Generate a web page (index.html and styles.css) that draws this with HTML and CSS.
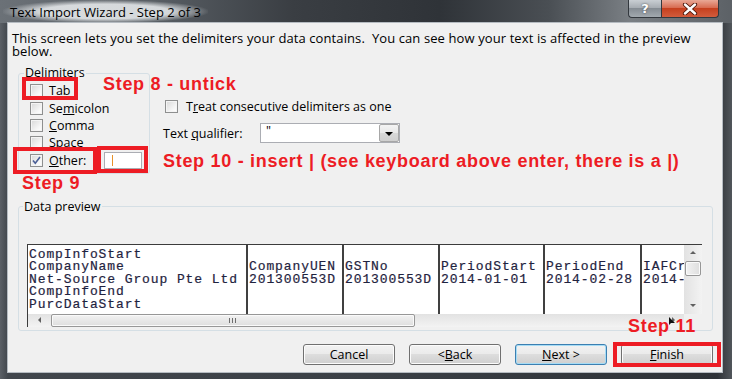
FILE: index.html
```html
<!DOCTYPE html>
<html lang="en">
<head>
    <meta charset="UTF-8">
    <meta name="viewport" content="width=device-width, initial-scale=1.0">
    <title>Text Import Wizard - Step 2 of 3</title>
    <link rel="stylesheet" href="styles.css">
</head>
<body>
<div class="window">
    <div class="titlebar">
        <span class="title">Text Import Wizard - Step 2 of 3</span>
        <div class="caption">
            <span class="cap-btn help">?</span>
            <span class="cap-btn close">
                <svg width="18" height="12" viewBox="0 0 18 12">
                    <path d="M4 1.5 L14 10.5 M14 1.5 L4 10.5" stroke="#4a1408" stroke-width="4.2" stroke-linecap="round"/>
                    <path d="M4 1.5 L14 10.5 M14 1.5 L4 10.5" stroke="#fff" stroke-width="2.4" stroke-linecap="round"/>
                </svg>
            </span>
        </div>
    </div>

    <div class="frame">
        <div class="client">
            <p class="intro">This screen lets you set the delimiters your data contains.&nbsp; You can see how your text is affected in the preview<br>below.</p>

            <div class="options">
                <fieldset class="group delimiters">
                    <legend>Delimiters</legend>
                    <div class="check"><span class="box"></span><span><u>T</u>ab</span></div>
                    <div class="check"><span class="box"></span><span>Se<u>m</u>icolon</span></div>
                    <div class="check"><span class="box"></span><span><u>C</u>omma</span></div>
                    <div class="check"><span class="box"></span><span><u>S</u>pace</span></div>
                    <div class="check">
                        <span class="box">
                            <svg width="11" height="11" viewBox="0 0 11 11"><path d="M2 5.5 L4.3 8.3 L9 2" fill="none" stroke="#4b5f96" stroke-width="1.6"/></svg>
                        </span>
                        <span><u>O</u>ther:</span>
                        <span class="other-input"><span class="caret"></span></span>
                    </div>
                </fieldset>

                <div class="side">
                    <div class="check treat"><span class="box"></span><span>T<u>r</u>eat consecutive delimiters as one</span></div>
                    <div class="qualifier">
                        <span class="qualifier-label">Text <u>q</u>ualifier:</span>
                        <div class="combo"><span class="combo-value">"</span><span class="combo-btn"></span></div>
                    </div>
                    <div class="note">Step 10 - insert | (see keyboard above enter, there is a |)</div>
                </div>
            </div>

            <div class="note step9">Step 9</div>

            <fieldset class="group preview">
                <legend>Data preview</legend>
                <div class="grid-wrap">
                    <div class="grid">
                        <div class="col">CompInfoStart
CompanyName
Net-Source Group Pte Ltd
CompInfoEnd
PurcDataStart</div>
                        <div class="col">
CompanyUEN
201300553D</div>
                        <div class="col">
GSTNo
201300553D</div>
                        <div class="col">
PeriodStart
2014-01-01</div>
                        <div class="col">
PeriodEnd
2014-02-28</div>
                        <div class="col last">
IAFCr
2014-</div>
                    </div>
                    <div class="vscroll">
                        <span class="arrow up"></span>
                        <span class="thumb"></span>
                        <span class="spacer"></span>
                        <span class="arrow down"></span>
                    </div>
                    <div class="hscroll">
                        <span class="arrow left"></span>
                        <span class="thumb"></span>
                        <span class="spacer"></span>
                        <span class="arrow right"></span>
                    </div>
                    <div class="corner"></div>
                </div>
            </fieldset>

            <div class="buttons">
                <span class="btn">Cancel</span>
                <span class="btn">&lt; <u>B</u>ack</span>
                <span class="btn default"><u>N</u>ext &gt;</span>
                <span class="btn"><u>F</u>inish</span>
            </div>

            <!-- tutorial annotations drawn over the dialog -->
            <span class="mark mark-tab"></span>
            <span class="mark mark-other"></span>
            <span class="mark mark-input"></span>
            <span class="mark mark-finish"></span>
            <span class="note note-step8">Step 8 - untick</span>
            <span class="note note-step11">Step 11</span>
            <svg class="pointer" width="8" height="10" viewBox="0 0 8 10"><path d="M1 0 L1 8 L3 6 L7 6 Z" fill="#111"/></svg>
        </div>
    </div>
</div>
</body>
</html>
```

FILE: styles.css
```css
/* Windows 7 style dialog */
* {
    box-sizing: border-box;
}

body {
    margin: 0;
    background: #2b2f34;
    font-family: "Open Sans", "Noto Sans", sans-serif;
}

.window {
    width: 732px;
    height: 379px;
    display: flex;
    flex-direction: column;
    background: #3d4248;
}

/* Title bar */
.titlebar {
    height: 23px;
    display: flex;
    background: linear-gradient(to right, #6b7177 0%, #5a6066 20%, #3a3e43 40%, #2f3338 60%, #4a4f54 75%, #7a7f84 86%, #5c6166 100%);
}

.title {
    margin-left: 3px;
    padding: 0 7px;
    font-size: 13px;
    line-height: 24px;
    color: #000;
    background: radial-gradient(ellipse at center, rgba(235, 238, 240, 0.85) 45%, rgba(235, 238, 240, 0) 72%);
}

.caption {
    margin-left: auto;
    margin-right: 13px;
    display: flex;
    align-self: flex-start;
}

.cap-btn {
    height: 18px;
    display: flex;
    align-items: center;
    justify-content: center;
    border: 1px solid #33383e;
    border-top: none;
}

.help {
    width: 33px;
    border-right: none;
    border-radius: 0 0 0 4px;
    background: linear-gradient(#c9ced3, #a7adb3 45%, #858c93 50%, #a2a9af);
    color: #fff;
    font: bold 13px "DejaVu Sans", sans-serif;
    text-shadow: 0 0 2px #3a3f44;
}

.close {
    width: 58px;
    border-radius: 0 0 4px 0;
    background: linear-gradient(#e9a896, #d86c52 45%, #c6401f 50%, #d25c3c);
}

/* Window frame and client area */
.frame {
    flex: 1;
    display: flex;
    padding: 0 10px 7px 8px;
    background: linear-gradient(to right, #5b6066 0px, #41464c 8px, #3b4046 50%, #2e3237 98%, #51565b 100%);
}

.client {
    flex: 1;
    position: relative;
    background: #f0f0f0;
    box-shadow: 0 0 0 1px #b5bbc1;
    font-size: 12.5px;
    color: #000;
}

.intro {
    margin: 9px 0 0 4px;
    font-size: 13px;
    letter-spacing: 0.1px;
    line-height: 13px;
    white-space: nowrap;
}

.options {
    display: flex;
    margin-top: 8px;
}

.group {
    margin: 0 0 0 10px;
    border: 1px solid #d5dfe5;
    border-radius: 3px;
    min-width: 0;
}

.group legend {
    padding: 0 1px;
    line-height: 14px;
}

.delimiters {
    width: 132px;
    padding: 2px 4px 4px 5px;
}

.check {
    display: flex;
    align-items: center;
    height: 17.4px;
    gap: 6px;
    white-space: nowrap;
}

.delimiters .check {
    padding-left: 6px;
}

.box {
    width: 13px;
    height: 13px;
    flex: none;
    display: flex;
    align-items: center;
    justify-content: center;
    border: 1px solid #8e8f8f;
    background: linear-gradient(135deg, #d8d8d8, #f7f7f7 70%, #ffffff);
    box-shadow: inset 0 0 0 1px #f4f4f4;
}

.other-input {
    width: 38px;
    height: 17px;
    margin-left: auto;
    margin-right: 3px;
    border: 1px solid #abadb3;
    background: #fff;
    display: flex;
    align-items: center;
    padding-left: 7px;
}

.caret {
    width: 1px;
    height: 11px;
    background: #e8922a;
}

/* Options on the right */
.side {
    margin-left: 13px;
    padding-top: 32px;
}

.treat {
    height: 17px;
    gap: 8px;
    padding-left: 2px;
}

.qualifier {
    display: flex;
    align-items: center;
    height: 20px;
    margin-top: 8px;
}

.qualifier-label {
    width: 97px;
}

.combo {
    width: 140px;
    height: 20px;
    display: flex;
    border: 1px solid #abadb3;
    background: #fff;
}

.combo-value {
    flex: 1;
    padding-left: 5px;
    line-height: 14px;
}

.combo-btn {
    width: 20px;
    position: relative;
    border: 1px solid #a7a7a7;
    border-radius: 2px;
    background: linear-gradient(#f4f4f4, #e8e8e8 50%, #d8d8d8 50%, #cfcfcf);
}

.combo-btn::after {
    content: "";
    position: absolute;
    left: 5px;
    top: 7px;
    border-left: 4px solid transparent;
    border-right: 4px solid transparent;
    border-top: 4px solid #000;
}

/* Red tutorial notes */
.note {
    color: #ed1c24;
    font: bold 18px/20px "Liberation Sans", Arial, sans-serif;
    letter-spacing: 0.7px;
    white-space: nowrap;
}

.side .note {
    margin-top: 8px;
}

.step9 {
    margin: -1px 0 0 14px;
}

/* Data preview */
.preview {
    width: 695px;
    margin-top: 7px;
    padding: 30px 10px 3px 4px;
}

.grid-wrap {
    margin-left: 4px;
    width: 675px;
    display: grid;
    grid-template-columns: 1fr 18px;
    grid-template-rows: 69px 13px;
    border-top: 1px solid #3c3c3c;
    border-left: 1px solid #3c3c3c;
}

.grid {
    display: grid;
    grid-template-columns: 220px 96px 96px 105px 97px 1fr;
    background: #fff;
    overflow: hidden;
    font: 13px/12.5px "Liberation Mono", monospace;
    letter-spacing: 0.9px;
    color: #1f2340;
    -webkit-text-stroke: 0.2px #1f2340;
}

.col {
    white-space: pre;
    overflow: hidden;
    padding: 4px 0 0 1px;
    border-right: 2px solid #404040;
}

.col.last {
    border-right: none;
}

.vscroll,
.hscroll {
    display: flex;
}

.vscroll {
    flex-direction: column;
    background: linear-gradient(to right, #e2e2e2, #f3f3f3);
}

.hscroll {
    background: linear-gradient(#e2e2e2, #f3f3f3);
}

.spacer {
    flex: 1;
}

.arrow {
    flex: none;
    display: flex;
    align-items: center;
    justify-content: center;
}

.vscroll .arrow {
    height: 16px;
}

.hscroll .arrow {
    width: 22px;
}

.arrow::after {
    content: "";
    border: 3px solid transparent;
}

.arrow.up::after {
    border-bottom: 3px solid #606060;
    border-top: none;
}

.arrow.down::after {
    border-top: 3px solid #606060;
    border-bottom: none;
}

.arrow.left::after {
    border-right: 3px solid #606060;
    border-left: none;
}

.arrow.right::after {
    border-left: 3px solid #606060;
    border-right: none;
}

.thumb {
    flex: none;
    position: relative;
    border: 1px solid #979797;
    border-radius: 2px;
    box-shadow: inset 0 0 0 1px #fafafa;
}

.vscroll .thumb {
    height: 15px;
    margin: 0 1px;
    background: linear-gradient(to right, #f2f2f2, #dedede);
}

.hscroll .thumb {
    width: 364px;
    margin: 0 0 0 1px;
    background: linear-gradient(#f2f2f2, #dedede);
}

.hscroll .thumb::after {
    content: "";
    position: absolute;
    left: 177px;
    top: 3px;
    width: 7px;
    height: 5px;
    background: repeating-linear-gradient(to right, #6e6e6e 0 1px, transparent 1px 3px);
}

.corner {
    background: #f0f0f0;
}

/* Buttons */
.buttons {
    display: flex;
    justify-content: flex-end;
    gap: 14px;
    margin-top: 13px;
    padding-right: 9px;
}

.btn {
    width: 92px;
    height: 21px;
    display: flex;
    align-items: center;
    justify-content: center;
    border: 1px solid #707070;
    border-radius: 3px;
    background: linear-gradient(#f2f2f2, #ebebeb 45%, #dddddd 50%, #cfcfcf);
    box-shadow: inset 0 0 0 1px #fcfcfc;
}

.btn.default {
    border-color: #3c7fb1;
    box-shadow: inset 0 0 0 1px #a6dcf5;
}

/* Annotations layered on top of the dialog */
.mark {
    position: absolute;
    border: 4px solid #ed1c24;
}

.mark-tab {
    left: 14px;
    top: 54px;
    width: 56px;
    height: 23px;
}

.mark-other {
    left: 5px;
    top: 124px;
    width: 84px;
    height: 27px;
}

.mark-input {
    left: 89px;
    top: 123px;
    width: 51px;
    height: 27px;
}

.mark-finish {
    left: 605px;
    top: 319px;
    width: 108px;
    height: 25px;
}

.note-step8 {
    position: absolute;
    left: 95px;
    top: 51px;
}

.note-step11 {
    position: absolute;
    left: 620px;
    top: 293px;
}

.pointer {
    position: absolute;
    left: 660px;
    top: 294px;
}
```
